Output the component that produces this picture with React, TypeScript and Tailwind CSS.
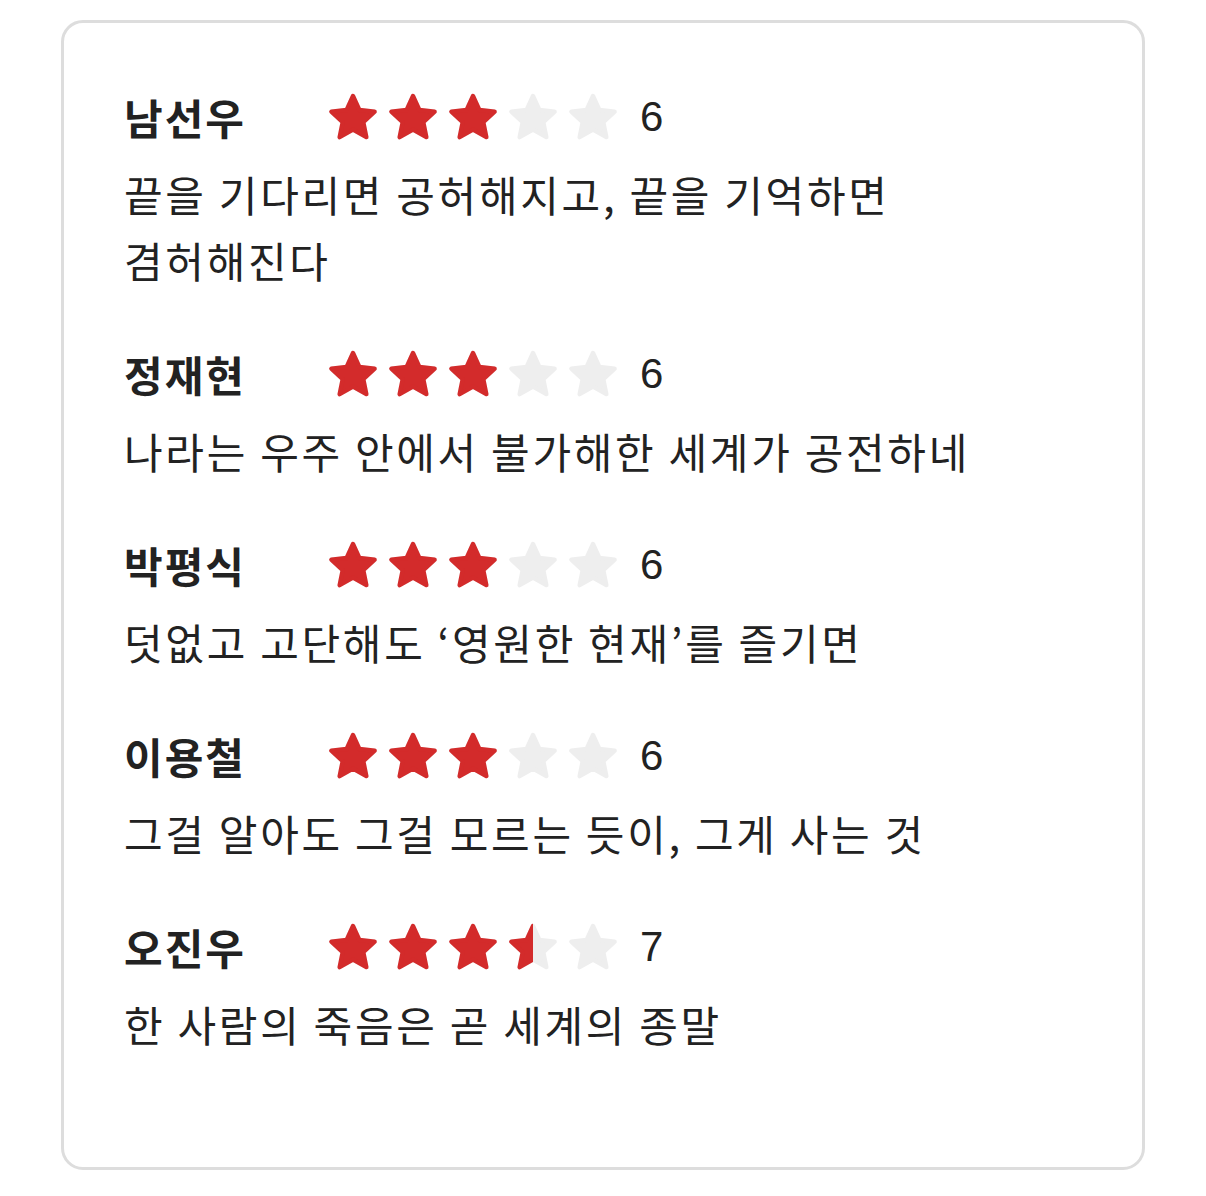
import React from 'react';

const reviews = [
    { name: '남선우', score: 6, text: '끝을 기다리면 공허해지고, 끝을 기억하면 겸허해진다' },
    { name: '정재현', score: 6, text: '나라는 우주 안에서 불가해한 세계가 공전하네' },
    { name: '박평식', score: 6, text: '덧없고 고단해도 ‘영원한 현재’를 즐기면' },
    { name: '이용철', score: 6, text: '그걸 알아도 그걸 모르는 듯이, 그게 사는 것' },
    { name: '오진우', score: 7, text: '한 사람의 죽음은 곧 세계의 종말' },
];

const STAR =
    '12,2.3 14.94,8.76 21.99,9.56 16.76,14.35 18.17,21.29 12,17.8 5.83,21.29 7.24,14.35 2.01,9.56 9.06,8.76';

const Star = ({ fill }: { fill: number }) => (
    <div className="relative w-[52px] h-[52px]">
        <svg viewBox="0 0 24 24" className="absolute inset-0 w-full h-full">
            <polygon points={STAR} fill="#eeeeee" stroke="#eeeeee" strokeWidth="2" strokeLinejoin="round" />
        </svg>
        {fill > 0 && (
            <div className="absolute inset-y-0 left-0 overflow-hidden" style={{ width: `${fill * 100}%` }}>
                <svg viewBox="0 0 24 24" className="w-[52px] h-[52px]">
                    <polygon points={STAR} fill="#d32b2b" stroke="#d32b2b" strokeWidth="2" strokeLinejoin="round" />
                </svg>
            </div>
        )}
    </div>
);

const Stars = ({ score }: { score: number }) => {
    const value = score / 2;
    return (
        <div className="flex items-center gap-[8px]">
            {[0, 1, 2, 3, 4].map(i => (
                <Star key={i} fill={Math.max(0, Math.min(1, value - i))} />
            ))}
        </div>
    );
};

export default function App() {
    return (
        <div className="bg-white min-h-[1196px] pt-[20px] px-[61px]" style={{ fontFamily: '"Noto Sans CJK KR", "Noto Sans", sans-serif' }}>
            <div className="border-[3px] border-[#dddddd] rounded-[22px] pl-[60px] pr-[60px] pt-[64px] pb-[110px] text-[#222222]">
                <div className="flex flex-col gap-[51px]">
                    {reviews.map((r, idx) => (
                        <div key={idx}>
                            <div className="flex items-center h-[60px]">
                                <span className="w-[203px] text-[42px] font-bold leading-[60px] tracking-[2px]">{r.name}</span>
                                <Stars score={r.score} />
                                <span className="ml-[21px] text-[42px] leading-[60px] font-['Liberation_Sans',sans-serif]">{r.score}</span>
                            </div>
                            <p className="mt-[14px] text-[42px] leading-[66px] tracking-[2.7px] break-keep">{r.text}</p>
                        </div>
                    ))}
                </div>
            </div>
        </div>
    );
}
